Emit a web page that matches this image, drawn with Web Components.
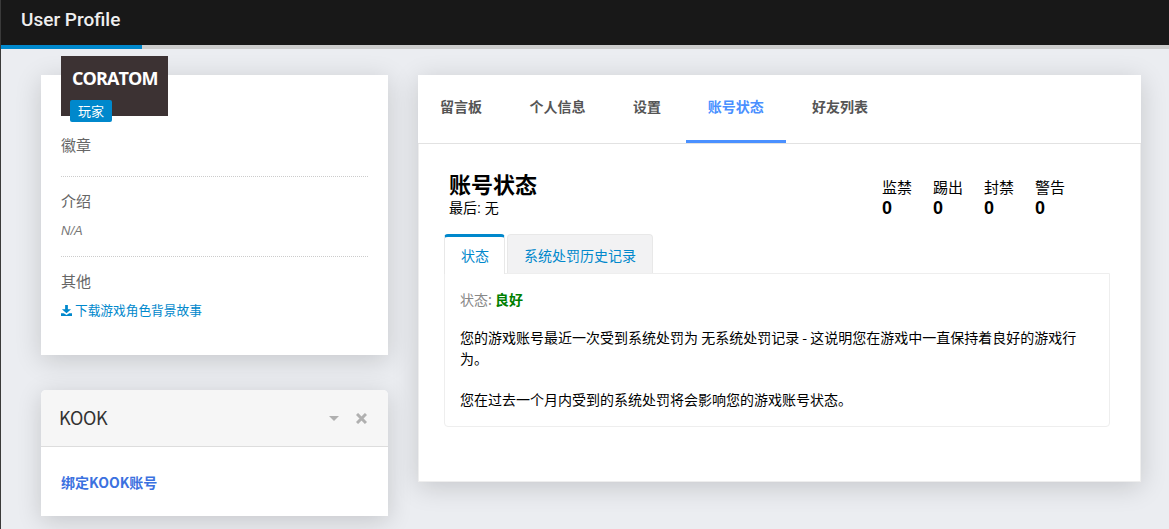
<!DOCTYPE html>
<html lang="zh">
<head>
<meta charset="utf-8">
<title>User Profile</title>
<style>
  html, body { margin: 0; height: 100%; overflow: hidden; }
  body {
    background: #ebedf1;
    font: 14px/20px "Liberation Sans", "Noto Sans CJK SC", sans-serif;
    border-left: 1px solid #3a3a3a;
    box-sizing: border-box;
    height: 529px;
  }
</style>
</head>
<body>
<profile-app></profile-app>

<template id="app-tpl">
  <style>
    :host { display: block; }
    .cols {
      display: flex; gap: 30px; padding: 26px 0 0 40px; align-items: flex-start;
      width: 1166px; height: 480px; box-sizing: border-box; overflow: hidden;
    }
    .left { width: 347px; display: flex; flex-direction: column; gap: 35px; }
  </style>
  <top-bar>User Profile</top-bar>
  <div class="cols">
    <div class="left">
      <player-card></player-card>
      <kook-panel></kook-panel>
    </div>
    <account-panel></account-panel>
  </div>
</template>

<template id="bar-tpl">
  <style>
    :host { display: block; }
    .bar {
      height: 45px; background: #181818; color: #eee; padding: 0 20px;
      font: 500 19px/39px Roboto, sans-serif;
    }
    .track { height: 4px; background: #ccc; }
    .fill { width: 141px; height: 100%; background: #0088cc; }
  </style>
  <div class="bar"><slot></slot></div>
  <div class="track"><div class="fill"></div></div>
</template>

<template id="player-tpl">
  <style>
    :host {
      display: block; position: relative; background: #fff; height: 280px; box-sizing: border-box;
      padding: 60px 20px 0; box-shadow: 0 5px 25px rgba(0,0,0,.16);
      color: #666;
    }
    .banner {
      position: absolute; left: 20px; top: -19px; width: 107px; height: 60px;
      background: #3c3233; color: #fff;
      font: 700 18px/20px "Open Sans", sans-serif; letter-spacing: -.9px;
      padding: 12px 0 0 11px; box-sizing: border-box;
    }
    .tag {
      position: absolute; left: 9px; top: 44px; width: 42px; height: 22px;
      background: #0088cc; color: #fff; border-radius: 2px; text-align: center;
      font: 13px/21px "Noto Sans CJK SC", sans-serif; letter-spacing: 0;
    }
    section { border-bottom: 1px dotted #ccc; box-sizing: border-box; }
    section:last-child { border: 0; }
    h4 { margin: 0; font: 400 15px/20px "Noto Sans CJK SC", sans-serif; color: #666; }
    .badges { height: 42px; }
    .intro { height: 80px; padding-top: 14px; }
    .other { padding-top: 14px; }
    .na { font: italic 13px/20px "Liberation Sans", sans-serif; color: #777; margin-top: 10px; }
    a { display: flex; align-items: center; gap: 3px; margin-top: 9px; color: #0088cc; font: 12.7px/20px "Noto Sans CJK SC", sans-serif; }
    svg { width: 11px; height: 11px; fill: #0088cc; }
  </style>
  <div class="banner">CORATOM<div class="tag">玩家</div></div>
  <section class="badges"><h4>徽章</h4></section>
  <section class="intro"><h4>介绍</h4><div class="na">N/A</div></section>
  <section class="other">
    <h4>其他</h4>
    <a><svg viewBox="0 0 12 12"><path d="M4.5 0h3v4.5H11L6 9 1 4.5h3.5z"/><path d="M0 9h3l3 2 3-2h3v3H0z"/></svg>下载游戏角色背景故事</a>
  </section>
</template>

<template id="kook-tpl">
  <style>
    :host {
      display: block; background: #fff; border-radius: 5px 5px 0 0;
      box-shadow: 0 5px 25px rgba(0,0,0,.16);
    }
    header {
      height: 56px; background: #f6f6f6; border-bottom: 1px solid #ddd; border-radius: 5px 5px 0 0;
      display: flex; align-items: center; padding: 0 21px 0 18px;
      font: 18px/24px "Noto Sans CJK SC", sans-serif; color: #333;
    }
    .title { flex: 1; letter-spacing: -.3px; padding-bottom: 2px; }
    .caret { width: 0; height: 0; border: 5px solid transparent; border-top-color: #b0b0b0; border-bottom: 0; margin-right: 17px; }
    svg { width: 11px; height: 11px; stroke: #b0b0b0; stroke-width: 3; }
    .body { height: 69px; padding: 25px 20px 0; box-sizing: border-box; color: #3b71e0; font: 700 14px/20px "Noto Sans CJK SC", sans-serif; }
  </style>
  <header><span class="title">KOOK</span><span class="caret"></span><svg viewBox="0 0 11 11"><path d="M1 1l9 9M10 1l-9 9"/></svg></header>
  <div class="body">绑定KOOK账号</div>
</template>

<template id="account-tpl">
  <style>
    :host {
      display: block; width: 723px; height: 407px; background: #fff;
      box-shadow: 0 5px 25px rgba(0,0,0,.16); color: #000;
    }
    nav { height: 68px; display: flex; border-bottom: 1px solid #e2e2e2; box-sizing: content-box; }
    nav span {
      height: 68px; box-sizing: border-box; padding: 20px 22px 0 22px; margin-right: 3.5px;
      font: 700 14px/22px "Noto Sans CJK SC", sans-serif; color: #555;
    }
    nav span.on { color: #4a90ff; border-bottom: 3px solid #4a90ff; margin-left: -.7px; margin-right: 4.2px; }
    .body {
      height: 338px; box-sizing: border-box; padding: 29px 30px 0 25px;
      border: 1px solid #eee; border-top: 0;
    }
    .head { display: flex; justify-content: space-between; padding-left: 5px; }
    h2 { margin: 0; font: 700 22px/26px "Liberation Sans", "Noto Sans CJK SC", sans-serif; color: #000; }
    .last { font: 14px/18px "Liberation Sans", "Noto Sans CJK SC", sans-serif; }
    .stats { display: flex; gap: 20px; margin: 5px 44px 0 0; }
    .stat { width: 31px; font: 15px/18px "Noto Sans CJK SC", sans-serif; }
    .stat b { display: block; margin-top: 2px; font: 700 18px/20px "Liberation Sans", sans-serif; }
    .tabs { display: flex; gap: 2px; margin-top: 16px; }
    .tab {
      height: 39px; box-sizing: border-box; padding: 0 16px; color: #0088cc; background: #f2f2f3;
      border: 1px solid #e8e8e8; border-bottom: 0; border-radius: 4px 4px 0 0;
      font: 14px/40px "Noto Sans CJK SC", sans-serif;
    }
    .tab.on {
      background: #fff; border-top: 3px solid #0088cc; line-height: 36px; height: 40px;
      margin-bottom: -1px; padding-right: 15px; position: relative;
    }
    .pane {
      border: 1px solid #eee; border-radius: 0 0 4px 4px; height: 154px; box-sizing: border-box;
      padding: 15px 15px 0; font: 14px/21px "Noto Sans CJK SC", sans-serif;
    }
    .state { color: #888; }
    .state b { color: #008000; }
    p { margin: 17px 0 0; }
    p + p { margin-top: 20px; }
  </style>
  <nav>
    <span>留言板</span><span>个人信息</span><span>设置</span><span class="on">账号状态</span><span>好友列表</span>
  </nav>
  <div class="body">
    <div class="head">
      <div><h2>账号状态</h2><div class="last">最后: 无</div></div>
      <div class="stats">
        <div class="stat">监禁<b>0</b></div>
        <div class="stat">踢出<b>0</b></div>
        <div class="stat">封禁<b>0</b></div>
        <div class="stat">警告<b>0</b></div>
      </div>
    </div>
    <div class="tabs"><div class="tab on">状态</div><div class="tab">系统处罚历史记录</div></div>
    <div class="pane">
      <div class="state">状态: <b>良好</b></div>
      <p>您的游戏账号最近一次受到系统处罚为 无系统处罚记录 - 这说明您在游戏中一直保持着良好的游戏行为。</p>
      <p>您在过去一个月内受到的系统处罚将会影响您的游戏账号状态。</p>
    </div>
  </div>
</template>

<script>
  function define(name, tpl) {
    customElements.define(name, class extends HTMLElement {
      constructor() {
        super();
        this.attachShadow({mode: 'open'});
        this.shadowRoot.appendChild(document.getElementById(tpl).content.cloneNode(true));
      }
    });
  }
  define('top-bar', 'bar-tpl');
  define('player-card', 'player-tpl');
  define('kook-panel', 'kook-tpl');
  define('account-panel', 'account-tpl');
  define('profile-app', 'app-tpl');
</script>
</body>
</html>
